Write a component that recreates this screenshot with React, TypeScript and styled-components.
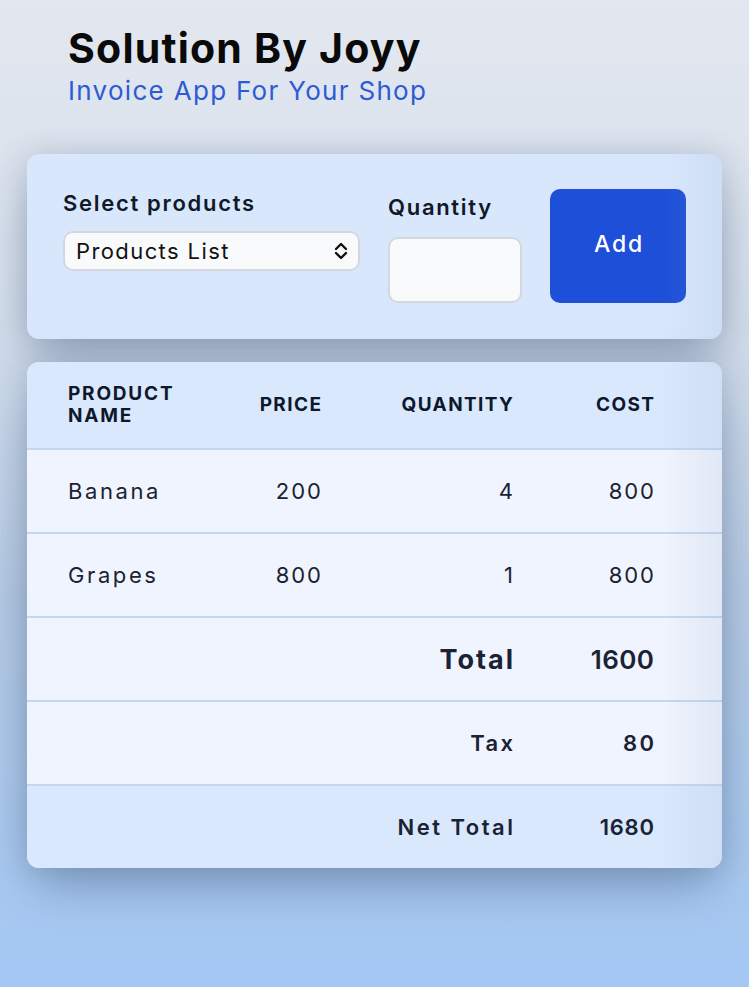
import React from 'react'
import styled, { createGlobalStyle } from 'styled-components'

const GlobalStyle = createGlobalStyle`
  html, body {
    margin: 0;
    padding: 0;
  }
  body {
    min-height: 100vh;
    font-family: 'Inter', 'Open Sans', sans-serif;
    color: #0f172a;
    background: linear-gradient(180deg, #e3e7ef 0%, #d6e0ec 30%, #b6cbe4 60%, #a3c8f4 100%);
  }
  * {
    box-sizing: border-box;
  }
`

const Page = styled.div`
  min-height: 100vh;
  padding: 24px 27px 40px;
  display: flex;
  flex-direction: column;
`

const Header = styled.header`
  padding-left: 41px;
  display: flex;
  flex-direction: column;
  margin-bottom: 46px;
`

const Title = styled.h1`
  margin: 0;
  font-size: 41px;
  line-height: 48px;
  font-weight: 700;
  color: #0a0a0a;
  letter-spacing: 1.2px;
`

const Subtitle = styled.p`
  margin: 2px 0 0;
  font-size: 26px;
  line-height: 34px;
  font-weight: 400;
  color: #2c5bd4;
  letter-spacing: 1.3px;
`

const Card = styled.section`
  position: relative;
  background: #d8e7fc;
  border-radius: 12px;
  overflow: hidden;
  box-shadow: 0 24px 50px -8px rgba(50, 72, 110, 0.4), 0 0 30px rgba(70, 90, 130, 0.2);

  &::after {
    content: '';
    position: absolute;
    top: 0;
    right: 0;
    bottom: 0;
    width: 60px;
    pointer-events: none;
    background: linear-gradient(90deg, rgba(150, 170, 200, 0) 0%, rgba(150, 170, 200, 0.16) 100%);
  }
`

const FormCard = styled(Card)`
  display: flex;
  align-items: flex-start;
  padding: 35px 35px 36px 36px;
  gap: 28px;
`

const Field = styled.div<{ width: number; offset?: number }>`
  display: flex;
  flex-direction: column;
  width: ${({ width }) => width}px;
  padding-top: ${({ offset }) => offset || 0}px;
`

const Label = styled.label<{ gap: number }>`
  font-size: 22px;
  line-height: 28px;
  font-weight: 600;
  color: #111827;
  letter-spacing: 1.7px;
  margin-bottom: ${({ gap }) => gap}px;
`

const SelectBox = styled.div`
  position: relative;
  height: 40px;
  border-radius: 10px;
  border: 2px solid #d4d8de;
  background: #f9fafb;
  display: flex;
  align-items: center;
  padding: 0 9px 0 11px;
  font-size: 22px;
  letter-spacing: 1.4px;
  color: #111;
  justify-content: space-between;
`

const QtyInput = styled.input`
  height: 66px;
  width: 100%;
  border-radius: 10px;
  border: 2px solid #d4d8de;
  background: #f9fafb;
  font-size: 22px;
  padding: 0 12px;
  outline: none;
`

const AddButton = styled.button`
  width: 136px;
  height: 114px;
  border: none;
  border-radius: 10px;
  background: #1d4fd8;
  color: #ffffff;
  font-family: inherit;
  font-size: 23px;
  font-weight: 500;
  letter-spacing: 1.8px;
  padding: 0 0 4px 2px;
`

const TableCard = styled(Card)`
  margin-top: 23px;
  display: flex;
  flex-direction: column;
`

const Row = styled.div<{ tone: 'head' | 'body' | 'foot' }>`
  display: grid;
  grid-template-columns: 152px 101px 192px 141px;
  align-items: center;
  height: ${({ tone }) => (tone === 'head' ? 86 : 84)}px;
  padding: 0 68px 0 41px;
  background: ${({ tone }) => (tone === 'body' ? '#eff4fe' : '#d9e8fc')};
  border-top: ${({ tone }) => (tone === 'head' ? 'none' : '2px solid #c3d8ef')};
`

const HeadCell = styled.div<{ left?: boolean }>`
  font-size: 19px;
  line-height: 22px;
  font-weight: 700;
  letter-spacing: ${({ left }) => (left ? 1.8 : 1.4)}px;
  margin-right: ${({ left }) => (left ? 0 : -1.4)}px;
  text-transform: uppercase;
  color: #0f172a;
  text-align: ${({ left }) => (left ? 'left' : 'right')};
`

const Cell = styled.div<{ left?: boolean; weight?: number; size?: number; spacing?: number }>`
  font-size: ${({ size }) => size || 22}px;
  font-weight: ${({ weight }) => weight || 400};
  letter-spacing: ${({ spacing }) => spacing ?? 2}px;
  margin-right: ${({ left, spacing }) => (left ? 0 : -(spacing ?? 2))}px;
  color: #1a2233;
  text-align: ${({ left }) => (left ? 'left' : 'right')};
  white-space: nowrap;
`

function Chevrons() {
  return (
    <svg width="16" height="20" viewBox="0 0 16 20" fill="none" stroke="#111" strokeWidth="2.4" strokeLinecap="round" strokeLinejoin="round">
      <polyline points="3,8 8,3 13,8" />
      <polyline points="3,12 8,17 13,12" />
    </svg>
  )
}

const items = [
  { name: 'Banana', price: 200, qty: 4 },
  { name: 'Grapes', price: 800, qty: 1 }
]

export default function App() {
  const total = items.reduce((sum, i) => sum + i.price * i.qty, 0)
  const tax = total * 0.05

  return (
    <>
      <GlobalStyle />
      <Page>
        <Header>
          <Title>Solution By Joyy</Title>
          <Subtitle>Invoice App For Your Shop</Subtitle>
        </Header>

        <FormCard>
          <Field width={297}>
            <Label gap={14}>Select products</Label>
            <SelectBox>
              <span>Products List</span>
              <Chevrons />
            </SelectBox>
          </Field>
          <Field width={134} offset={4}>
            <Label gap={16}>Quantity</Label>
            <QtyInput type="number" />
          </Field>
          <AddButton>Add</AddButton>
        </FormCard>

        <TableCard>
          <Row tone="head">
            <HeadCell left>
              Product
              <br />
              Name
            </HeadCell>
            <HeadCell>Price</HeadCell>
            <HeadCell>Quantity</HeadCell>
            <HeadCell>Cost</HeadCell>
          </Row>
          {items.map(item => (
            <Row tone="body" key={item.name}>
              <Cell left spacing={2.6}>{item.name}</Cell>
              <Cell>{item.price}</Cell>
              <Cell>{item.qty}</Cell>
              <Cell>{item.price * item.qty}</Cell>
            </Row>
          ))}
          <Row tone="body">
            <span />
            <span />
            <Cell weight={700} size={27}>Total</Cell>
            <Cell weight={600} size={26} spacing={0.4}>{total}</Cell>
          </Row>
          <Row tone="body">
            <span />
            <span />
            <Cell weight={600} spacing={2.4}>Tax</Cell>
            <Cell weight={600} spacing={2.4}>{tax}</Cell>
          </Row>
          <Row tone="foot">
            <span />
            <span />
            <Cell weight={600} spacing={2.5}>Net Total</Cell>
            <Cell weight={600} spacing={0.8}>{total + tax}</Cell>
          </Row>
        </TableCard>
      </Page>
    </>
  )
}
